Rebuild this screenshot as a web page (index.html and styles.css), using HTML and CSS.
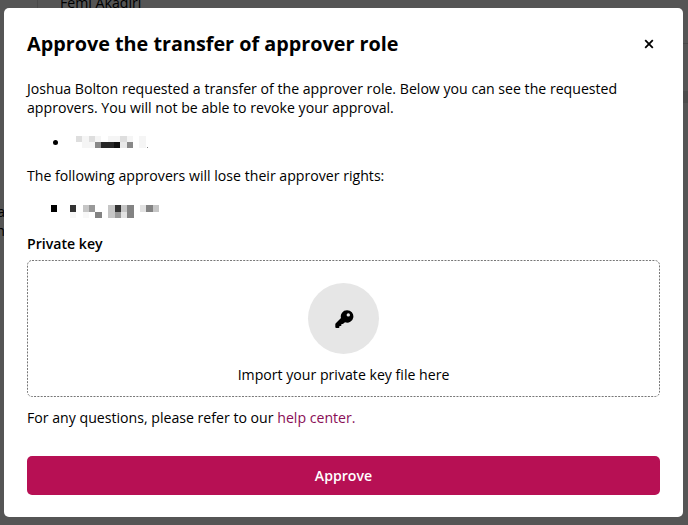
FILE: index.html
```html
<!DOCTYPE html>
<html lang="en">
<head>
    <meta charset="UTF-8">
    <meta name="viewport" content="width=device-width, initial-scale=1.0">
    <title>Approve the transfer of approver role</title>
    <link rel="stylesheet" href="styles.css">
</head>
<body>
    <!-- page behind the overlay -->
    <div class="backdrop">
        <span class="page-line"></span>
        <span class="page-name">Femi Akadiri</span>
        <span class="page-text page-text-a">a</span>
        <span class="page-text page-text-h">h</span>
        <span class="page-rule"></span>
        <span class="page-band"></span>
    </div>

    <div class="modal">
        <div class="modal-header">
            <h1>Approve the transfer of approver role</h1>
            <button class="close" aria-label="Close">
                <svg width="10" height="10" viewBox="0 0 10 10"><path d="M1.200 1.200 8.800 8.800M8.800 1.200 1.200 8.800" stroke="#000" stroke-width="1.800" fill="none"/></svg>
            </button>
        </div>

        <p class="intro">Joshua Bolton requested a transfer of the approver role. Below you can see the requested approvers. You will not be able to revoke your approval.</p>

        <div class="approver">
            <span class="bullet"></span>
            <!-- hidden name -->
            <svg class="redacted" width="73" height="12" viewBox="0 0 11.500 2" preserveAspectRatio="none" shape-rendering="crispEdges">
                <path fill="#f5f5f5" d="M1 0h1v1h-1zM3 0h1v1h-1zM5 0h2v1h-2zM8 0h1v1h-1zM1 1h2v1h-2zM10 0h1v2h-1z"/>
                <path fill="#dedede" d="M0 0h1v1h-1zM2 0h1v1h-1zM7 0h1v1h-1z"/>
                <path fill="#e9e9e9" d="M7 1h1v1h-1z"/>
                <path fill="#888" d="M3 1h1v1h-1zM8 1h1v1h-1zM11.200 1.800h.2v.2h-.2z"/>
                <path fill="#272727" d="M4 1h2v1h-2z"/>
                <path fill="#111" d="M6 1h1v1h-1z"/>
            </svg>
        </div>

        <p class="losing">The following approvers will lose their approver rights:</p>

        <div class="approver approver-old">
            <svg width="108" height="13" viewBox="0 0 17 2" preserveAspectRatio="none" shape-rendering="crispEdges">
                <path fill="#000" d="M0 0h1v1h-1z"/>
                <path fill="#333" d="M3 0h1v1h-1zM10 0h1v1h-1z"/>
                <path fill="#c6c6c6" d="M5 0h1v1h-1zM9 0h1v2h-1zM11 0h1v1h-1zM16 0h1v1h-1z"/>
                <path fill="#999" d="M6 0h1v1h-1zM10 1h1v1h-1z"/>
                <path fill="#838383" d="M7 1h1v1h-1zM12 0h1v2h-1zM15 0h1v1h-1z"/>
                <path fill="#e2e2e2" d="M11 1h1v1h-1zM14 0h1v1h-1z"/>
                <path fill="#f8f8f8" d="M3 1h1v1h-1zM5 1h1v1h-1z"/>
            </svg>
        </div>

        <h2>Private key</h2>
        <div class="dropzone">
            <svg class="dashes" width="633" height="137">
                <rect x=".5" y=".5" width="632" height="136" rx="4.500" fill="none" stroke="#777" stroke-dasharray="2 1.300"/>
            </svg>
            <div class="key-circle">
                <svg width="20" height="20" viewBox="0 0 20 20">
                    <path fill="#000" fill-rule="evenodd" d="M13 1.200a6.200 6.200 0 0 0-6 7.900L1.800 14.300Q1.300 14.800 1.300 15.500V18Q1.300 19 2.300 19H4.500Q5.400 19 5.400 18V17H6.600Q7.400 17 7.400 16.200V15H8.600Q9.100 15 9.500 14.600L11 13.200A6.200 6.200 0 1 0 13 1.200zM14.300 4.200a1.700 1.700 0 1 1 0 3.400a1.700 1.700 0 0 1 0-3.400z"/>
                </svg>
            </div>
            <p>Import your private key file here</p>
        </div>

        <p class="help">For any questions, please refer to our <a href="#">help center.</a></p>

        <button class="approve">Approve</button>
    </div>
</body>
</html>
```
FILE: styles.css
```css
* {
    box-sizing: border-box;
}
body {
    margin: 0;
    height: 525px;
    overflow: hidden;
    background-color: #555;
    color: #000;
    font-family: "Open Sans", "Noto Sans", sans-serif;
    font-size: 14.14px;
    line-height: 19px;
}
h1, h2, p {
    margin: 0;
}
button {
    border: 0;
    padding: 0;
    font-family: inherit;
    cursor: pointer;
}
svg {
    display: block;
}

/* what shows around the modal */
.backdrop {
    position: absolute;
    inset: 0;
    overflow: hidden;
}
.backdrop span {
    position: absolute;
}
.page-line {
    left: 37px;
    top: 0;
    width: 1px;
    height: 9px;
    background-color: #4a4a4a;
}
.page-name {
    left: 60px;
    top: -7px;
}
.page-text {
    right: 683px;
}
.page-text-a {
    top: 202px;
}
.page-text-h {
    top: 221px;
}
.page-rule {
    right: 0;
    top: 43px;
    width: 6px;
    height: 1px;
    background-color: #484848;
}
.page-band {
    right: 0;
    top: 91px;
    width: 6px;
    height: 12px;
    background-color: #4c4c4c;
}

.modal {
    position: relative;
    width: 679px;
    height: 509px;
    margin: 8px 0 0 4px;
    padding: 22px 23px;
    background-color: #fff;
    border-radius: 5px;
    display: flex;
    flex-direction: column;
}
.modal-header {
    display: flex;
    justify-content: space-between;
    align-items: center;
    height: 28px;
    padding-right: 6px;
}
h1 {
    font-size: 19.8px;
    line-height: 28px;
    font-weight: 700;
}
.close {
    background: none;
}
.intro {
    margin-top: 21px;
}
.approver {
    display: flex;
    align-items: center;
    height: 12px;
    margin: 19px 0 0 26px;
}
.bullet {
    width: 5px;
    height: 5px;
    border-radius: 50%;
    background-color: #000;
}
.redacted {
    margin-left: 18px;
}
.losing {
    margin-top: 18px;
}
.approver-old {
    height: 13px;
    margin: 20px 0 0 24px;
}
h2 {
    margin-top: 16px;
    font-size: 14.14px;
    line-height: 19px;
    font-weight: 600;
}
.dropzone {
    position: relative;
    display: flex;
    flex-direction: column;
    align-items: center;
    height: 137px;
    margin-top: 7px;
    padding-top: 23px;
}
/* finer dashes than a dashed border gives */
.dashes {
    position: absolute;
    inset: 0;
}
.key-circle {
    display: flex;
    justify-content: center;
    align-items: center;
    width: 71px;
    height: 71px;
    margin-bottom: 11px;
    border-radius: 50%;
    background-color: #e6e6e6;
}
.help {
    margin-top: 11px;
}
.help a {
    color: #8a0f57;
    text-decoration: none;
}
.approve {
    height: 39px;
    margin-top: 29px;
    border-radius: 5px;
    background-color: #b71054;
    color: #fff;
    font-size: 14.14px;
    font-weight: 600;
}
```
